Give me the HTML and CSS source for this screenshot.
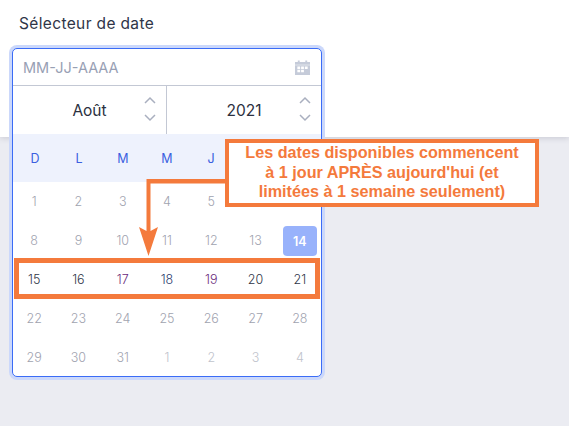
FILE: index.html
```html
<!DOCTYPE html>
<html lang="fr">

<head>
    <meta charset="utf-8">
    <title>Sélecteur de date</title>
    <link rel="stylesheet" href="styles.css">
</head>

<body>
    <section class="panel">
        <label class="titre">Sélecteur de date</label>
        <div class="picker">
            <div class="champ">
                <span class="placeholder">MM-JJ-AAAA</span>
                <svg class="cal" width="15" height="15" viewBox="0 0 16 16">
                    <path fill="#c5cbd9" fill-rule="evenodd" d="M3 0.500h2v1.500h6V0.500h2V2h3v14H0V2h3z M0 5v0.500h16V5z M2.500 7v2.500h3V7z M6.500 7v2.500h3V7z M10.500 7v2.500h3V7z M2.500 10.500v2.500h3v-2.500z M6.500 10.500v2.500h3v-2.500z" />
                </svg>
            </div>
            <div class="selects">
                <div class="select mois">
                    <span>Août</span>
                    <svg class="fleches" width="12" height="26" viewBox="0 0 12 26">
                        <path d="M1 7l5-5 5 5M1 19l5 5 5-5" />
                    </svg>
                </div>
                <div class="select">
                    <span>2021</span>
                    <svg class="fleches" width="12" height="26" viewBox="0 0 12 26">
                        <path d="M1 7l5-5 5 5M1 19l5 5 5-5" />
                    </svg>
                </div>
            </div>
            <div class="semaine">
                <span>D</span><span>L</span><span>M</span><span>M</span><span>J</span><span></span><span></span>
            </div>
            <div class="jours">
                <span>1</span><span>2</span><span>3</span><span>4</span><span>5</span><span></span><span></span>
                <span>8</span><span>9</span><span>10</span><span>11</span><span>12</span><span>13</span><span class="auj">14</span>
                <span class="dispo">15</span><span class="dispo">16</span><span class="dispo violet">17</span><span class="dispo bleu">18</span><span class="dispo violet">19</span><span class="dispo">20</span><span class="dispo">21</span>
                <span>22</span><span>23</span><span>24</span><span>25</span><span>26</span><span>27</span><span>28</span>
                <span>29</span><span>30</span><span>31</span><span class="hors">1</span><span class="hors">2</span><span class="hors">3</span><span class="hors">4</span>
            </div>
        </div>
    </section>

    <!-- annotation par dessus le calendrier -->
    <div class="cadre-semaine"></div>
    <svg class="fleche" width="90" height="78" viewBox="0 0 90 78">
        <path fill="#f47a3c" d="M7.500 0H90V4.500H11.500V52L19 48L9.500 77L0 48L7.500 52z" />
    </svg>
    <div class="note">Les dates disponibles commencent<br>à 1 jour APRÈS aujourd'hui (et<br>limitées à 1 semaine seulement)</div>
</body>

</html>
```

FILE: styles.css
```css
* {
    box-sizing: border-box;
}

body {
    margin: 0;
    height: 426px;
    overflow: hidden;
    font-family: Inter, sans-serif;
    background: #ebecf2;
}

.panel {
    height: 137px;
    padding: 14px 10px 0;
    background: #fff;
    box-shadow: 0 1px 6px rgba(60, 60, 80, 0.2);
}

.titre {
    display: block;
    margin-left: 9px;
    height: 20px;
    font-size: 15.500px;
    line-height: 19px;
    letter-spacing: 0.36px;
    color: #2f3547;
}

.picker {
    width: 310px;
    height: 329px;
    margin: 14px 0 0 2px;
    border: 1px solid #3b6cf6;
    border-radius: 5px;
    box-shadow: 0 0 0 3px #cbd8fb;
    background: #fff;
}

.champ {
    display: flex;
    align-items: center;
    justify-content: space-between;
    height: 37px;
    padding: 0 11px 0 10px;
    border-bottom: 1px solid #c3c8d4;
}

.placeholder {
    font-size: 14.500px;
    color: #98a0b4;
}

.selects {
    display: flex;
    height: 48px;
}

.select {
    flex: 1;
    display: flex;
    align-items: center;
    justify-content: center;
    position: relative;
    font-size: 15.500px;
    color: #2b3040;
}

.mois {
    flex: 0 0 153px;
}

.select + .select {
    border-left: 1px solid #c3c8d4;
}

.fleches {
    position: absolute;
    right: 10px;
    top: 10px;
    fill: none;
    stroke: #a9afbf;
    stroke-width: 1.5;
}

.semaine,
.jours {
    display: grid;
    grid-template-columns: repeat(7, 1fr);
    justify-items: center;
    align-items: center;
}

.semaine {
    height: 48px;
    background: #eef2fd;
    font-size: 12.500px;
    color: #3b5fe0;
}

.jours {
    margin: 0 -1px;
    grid-auto-rows: 39px;
    font-size: 12.500px;
    font-weight: 300;
    color: #9fa3af;
}

.jours .dispo {
    color: #2f3547;
}

.jours .violet {
    color: #6a2a7c;
}

.jours .bleu {
    color: #2c3a6e;
}

.jours .hors {
    color: #c0c3cc;
}

.jours .auj {
    justify-self: stretch;
    align-self: stretch;
    display: flex;
    align-items: center;
    justify-content: center;
    margin: 5px 5px 4px;
    border-radius: 4px;
    background: #98b2fb;
    font-weight: 600;
    color: #fff;
}

.cadre-semaine {
    position: absolute;
    left: 14px;
    top: 258px;
    width: 306px;
    height: 41px;
    border: 5px solid #f47a3c;
}

.fleche {
    position: absolute;
    left: 139px;
    top: 179px;
}

.note {
    position: absolute;
    left: 225px;
    top: 139px;
    width: 314px;
    height: 68px;
    border: 4px solid #f47a3c;
    background: #fff;
    font-family: "Liberation Sans", sans-serif;
    font-size: 16.200px;
    font-weight: 700;
    line-height: 19.700px;
    text-align: center;
    color: #f47a3c;
}
```
